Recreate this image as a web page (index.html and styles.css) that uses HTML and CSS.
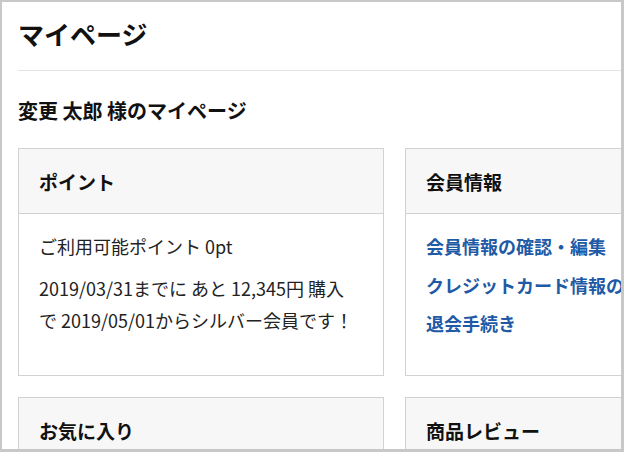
FILE: index.html
```html
<!DOCTYPE html>
<html lang="ja">
<head>
<meta charset="utf-8">
<title>マイページ</title>
<link rel="stylesheet" href="styles.css">
</head>
<body>
<div class="frame">
  <div class="page">
    <header class="page-header">
      <h1 class="page-title">マイページ</h1>
    </header>
    <h2 class="greeting">変更 太郎 様のマイページ</h2>
    <div class="cards">
      <section class="card">
        <h3 class="card-head">ポイント</h3>
        <div class="card-body">
          <p class="text">ご利用可能ポイント 0pt</p>
          <p class="text">2019/03/31までに あと 12,345円 購入<br>で 2019/05/01からシルバー会員です！</p>
        </div>
      </section>
      <section class="card">
        <h3 class="card-head">会員情報</h3>
        <div class="card-body">
          <ul class="links">
            <li><a class="link" href="#">会員情報の確認・編集</a></li>
            <li><a class="link" href="#">クレジットカード情報の変更</a></li>
            <li><a class="link" href="#">退会手続き</a></li>
          </ul>
        </div>
      </section>
      <section class="card">
        <h3 class="card-head">お気に入り</h3>
        <div class="card-body"></div>
      </section>
      <section class="card">
        <h3 class="card-head">商品レビュー</h3>
        <div class="card-body"></div>
      </section>
    </div>
  </div>
</div>
</body>
</html>
```

FILE: styles.css
```css
* { box-sizing: border-box; }
html, body {
  margin: 0;
  padding: 0;
  background: #c8c8c8;
}
body {
  width: 624px;
  height: 452px;
  overflow: hidden;
  font-family: "Noto Sans CJK JP", "Noto Sans", sans-serif;
  color: #222;
}
.frame {
  margin: 2px 3px 0 2px;
  width: 619px;
  height: 447px;
  background: #fff;
  overflow: hidden;
}
.page {
  padding-left: 16px;
  width: 900px;
}
.page-header {
  padding-top: 15px;
  padding-bottom: 19px;
  border-bottom: 1px solid #e4e4e4;
}
.page-title {
  margin: 0;
  font-size: 26px;
  line-height: 34px;
  font-weight: 700;
  color: #111;
}
.greeting {
  margin: 26px 0 23px;
  font-size: 20px;
  line-height: 28px;
  font-weight: 700;
  color: #111;
}
.cards {
  display: grid;
  grid-template-columns: 366px 366px;
  column-gap: 21px;
  row-gap: 21px;
}
.card {
  border: 1px solid #d2d2d2;
  background: #fff;
}
.card-head {
  margin: 0;
  height: 65px;
  padding: 0 20px;
  display: flex;
  align-items: center;
  background: #f7f7f7;
  border-bottom: 1px solid #d2d2d2;
  font-size: 19px;
  font-weight: 700;
  color: #111;
}
.card-body {
  min-height: 161px;
  padding: 16px 20px;
}
.text {
  margin: 0 0 10px;
  font-size: 18px;
  line-height: 32px;
}
.links {
  list-style: none;
  margin: 0;
  padding: 0;
}
.links li {
  height: 38.5px;
  line-height: 32px;
  white-space: nowrap;
}
.link {
  font-size: 18px;
  font-weight: 700;
  color: #1f5aa6;
  text-decoration: none;
}
```
